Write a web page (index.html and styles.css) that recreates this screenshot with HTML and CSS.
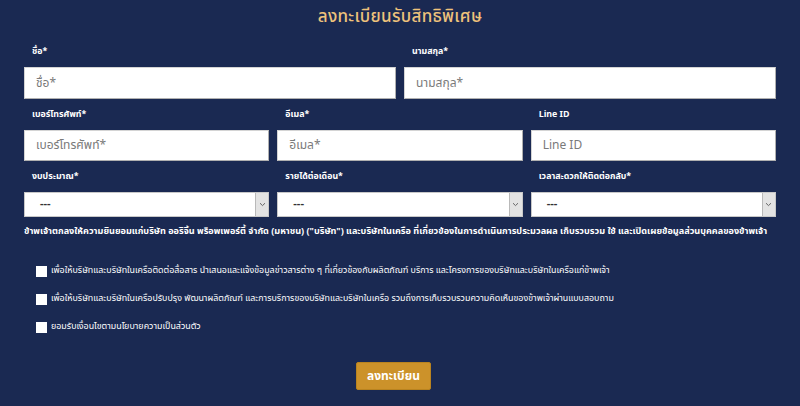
FILE: index.html
```html
<!DOCTYPE html>
<html lang="th">
<head>
<meta charset="utf-8">
<title>ลงทะเบียนรับสิทธิพิเศษ</title>
<link rel="stylesheet" href="styles.css">
</head>
<body>
<div class="page">
  <h1 class="title">ลงทะเบียนรับสิทธิพิเศษ</h1>
  <form class="form">
    <div class="row cols-2">
      <div class="field">
        <label class="label">ชื่อ*</label>
        <div class="input">ชื่อ*</div>
      </div>
      <div class="field">
        <label class="label">นามสกุล*</label>
        <div class="input">นามสกุล*</div>
      </div>
    </div>
    <div class="row cols-3">
      <div class="field">
        <label class="label">เบอร์โทรศัพท์*</label>
        <div class="input short">เบอร์โทรศัพท์*</div>
      </div>
      <div class="field">
        <label class="label">อีเมล*</label>
        <div class="input short">อีเมล*</div>
      </div>
      <div class="field">
        <label class="label">Line ID</label>
        <div class="input short">Line ID</div>
      </div>
    </div>
    <div class="row cols-3">
      <div class="field">
        <label class="label">งบประมาณ*</label>
        <div class="select"><span class="select-val">---</span><span class="arrow"><svg width="7" height="5" viewBox="0 0 7 5"><path d="M1 1.2 L3.5 3.6 L6 1.2" fill="none" stroke="#666" stroke-width="1"/></svg></span></div>
      </div>
      <div class="field">
        <label class="label">รายได้ต่อเดือน*</label>
        <div class="select"><span class="select-val">---</span><span class="arrow"><svg width="7" height="5" viewBox="0 0 7 5"><path d="M1 1.2 L3.5 3.6 L6 1.2" fill="none" stroke="#666" stroke-width="1"/></svg></span></div>
      </div>
      <div class="field">
        <label class="label">เวลาสะดวกให้ติดต่อกลับ*</label>
        <div class="select"><span class="select-val">---</span><span class="arrow"><svg width="7" height="5" viewBox="0 0 7 5"><path d="M1 1.2 L3.5 3.6 L6 1.2" fill="none" stroke="#666" stroke-width="1"/></svg></span></div>
      </div>
    </div>
    <p class="consent">ข้าพเจ้าตกลงให้ความยินยอมแก่บริษัท ออริจิ้น พร็อพเพอร์ตี้ จำกัด (มหาชน) ("บริษัท") และบริษัทในเครือ ที่เกี่ยวข้องในการดำเนินการประมวลผล เก็บรวบรวม ใช้ และเปิดเผยข้อมูลส่วนบุคคลของข้าพเจ้า</p>
    <div class="checks">
      <div class="check"><span class="box"></span><span>เพื่อให้บริษัทและบริษัทในเครือติดต่อสื่อสาร นำเสนอและแจ้งข้อมูลข่าวสารต่าง ๆ ที่เกี่ยวข้องกับผลิตภัณฑ์ บริการ และโครงการของบริษัทและบริษัทในเครือแก่ข้าพเจ้า</span></div>
      <div class="check"><span class="box"></span><span>เพื่อให้บริษัทและบริษัทในเครือปรับปรุง พัฒนาผลิตภัณฑ์ และการบริการของบริษัทและบริษัทในเครือ รวมถึงการเก็บรวบรวมความคิดเห็นของข้าพเจ้าผ่านแบบสอบถาม</span></div>
      <div class="check"><span class="box"></span><span>ยอมรับเงื่อนไขตามนโยบายความเป็นส่วนตัว</span></div>
    </div>
    <div class="actions">
      <button type="button" class="btn">ลงทะเบียน</button>
    </div>
  </form>
</div>
</body>
</html>
```
FILE: styles.css
```css
* { box-sizing: border-box; }
html, body {
  margin: 0;
  padding: 0;
  background: #1a2952;
}
body {
  font-family: "Noto Sans Thai", "Noto Sans", "DejaVu Sans", sans-serif;
  color: #ffffff;
  width: 800px;
  height: 406px;
  overflow: hidden;
}
.page {
  padding: 5px 24px 0 24px;
}
.title {
  margin: 0 0 15px 0;
  text-align: center;
  font-size: 17px;
  line-height: 24px;
  font-weight: 500;
  color: #eec27b;
  letter-spacing: 0.3px;
}
.form {
  display: flex;
  flex-direction: column;
}
.row {
  display: grid;
  gap: 8px;
  margin-bottom: 8px;
}
.cols-2 { grid-template-columns: 1fr 1fr; }
.cols-3 { grid-template-columns: 1fr 1fr 1fr; }
.field {
  display: flex;
  flex-direction: column;
}
.label {
  display: block;
  padding-left: 8px;
  font-size: 8.8px;
  line-height: 16px;
  font-weight: 700;
  margin-bottom: 7px;
  white-space: nowrap;
}
.input {
  height: 32px;
  background: #ffffff;
  border: 1px solid #d4d4d4;
  border-right-color: #b0b0b0;
  border-bottom-color: #b0b0b0;
  color: #7a7a7a;
  font-size: 12px;
  line-height: 30px;
  padding-left: 11px;
}
.input.short { height: 31px; line-height: 29px; }
.select {
  height: 25px;
  background: #ffffff;
  border: 1px solid #c8c8c8;
  display: flex;
  align-items: stretch;
  justify-content: space-between;
  color: #333;
}
.select-val {
  padding-left: 15px;
  font-size: 11px;
  line-height: 22px;
  font-weight: 700;
}
.arrow {
  width: 13px;
  background: #e3e3e3;
  border-left: 1px solid #b9b9b9;
  display: flex;
  align-items: center;
  justify-content: center;
}
.consent {
  margin: -2px 0 0 0;
  font-size: 9.1px;
  line-height: 16px;
  font-weight: 700;
  white-space: nowrap;
}
.checks {
  display: flex;
  flex-direction: column;
  gap: 12px;
  margin-top: 24px;
  padding-left: 12px;
}
.check {
  display: flex;
  align-items: center;
  gap: 4px;
  font-size: 8.9px;
  line-height: 16px;
  white-space: nowrap;
}
.box {
  width: 11px;
  height: 11px;
  background: #ffffff;
  flex: none;
}
.actions {
  display: flex;
  justify-content: center;
  margin-top: 26px;
}
.btn {
  width: 75px;
  height: 28px;
  background: #cc922a;
  border: 1px solid #b9831f;
  border-radius: 2px;
  color: #ffffff;
  font-family: inherit;
  font-size: 12px;
  font-weight: 700;
  padding: 0;
  margin: 1px 13px 0 0;
}
```
